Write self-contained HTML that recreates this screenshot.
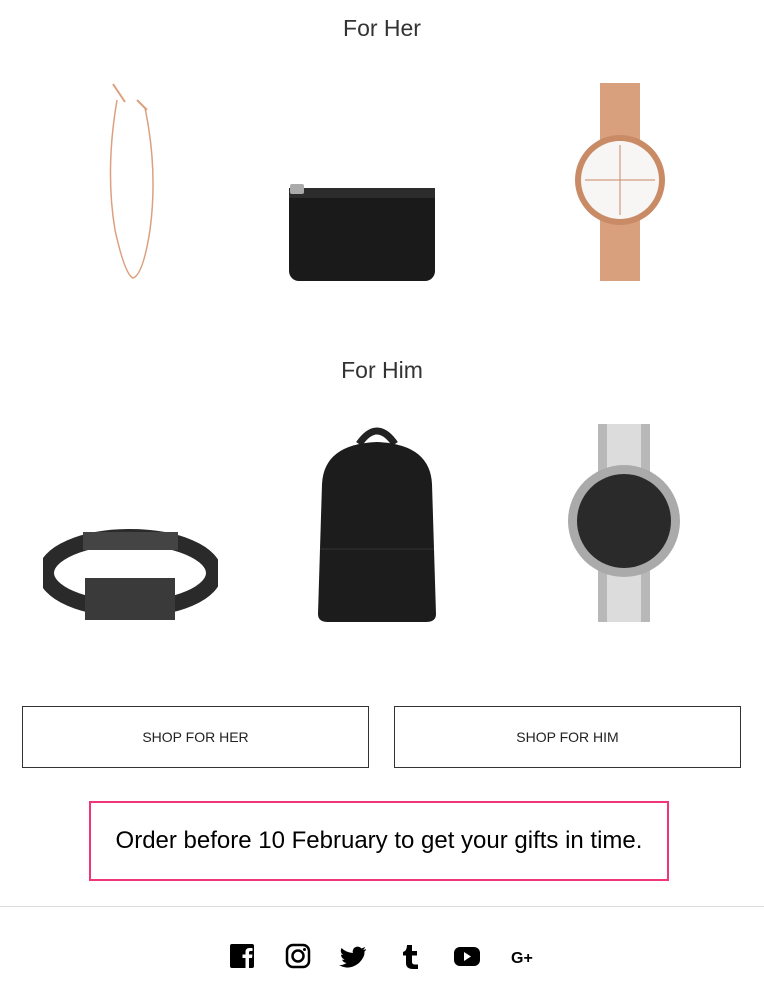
<!DOCTYPE html>
<html><head><meta charset="utf-8"><style>
body{margin:0;width:764px;height:989px;background:#fff;font-family:"Liberation Sans",Arial,sans-serif;position:relative;overflow:hidden}
.t{position:absolute;left:0;width:764px;text-align:center;font-size:23px;color:#333}
.a{position:absolute}
.btn{position:absolute;top:706px;width:347px;height:62px;border:1px solid #333;box-sizing:border-box;text-align:center;line-height:60px;font-size:14px;color:#222}
</style></head><body>
<div class="t" style="top:15px">For Her</div>
<div class="t" style="top:357px">For Him</div>
<svg class="a" style="left:95px;top:80px" width="80" height="205"><path d="M22 20 Q10 90 20 150 Q30 195 38 198 Q48 195 55 150 Q63 90 50 28" fill="none" stroke="#dca07e" stroke-width="1.5"/><path d="M18 4 L30 22 M42 20 L52 30" stroke="#dca07e" stroke-width="2"/></svg>
<svg class="a" style="left:286px;top:180px" width="152" height="104"><rect x="3" y="8" width="146" height="93" rx="10" fill="#1a1a1a"/><rect x="3" y="8" width="146" height="10" fill="#2c2c2c"/><rect x="4" y="4" width="14" height="10" rx="2" fill="#aaa"/></svg>
<svg class="a" style="left:572px;top:80px" width="96" height="204"><rect x="28" y="3" width="40" height="198" fill="#d9a07e"/><circle cx="48" cy="100" r="45" fill="#c98a66"/><circle cx="48" cy="100" r="39" fill="#f8f6f4"/><line x1="48" y1="65" x2="48" y2="135" stroke="#c98a66"/><line x1="13" y1="100" x2="83" y2="100" stroke="#c98a66"/></svg>
<svg class="a" style="left:43px;top:528px" width="175" height="98"><ellipse cx="87" cy="45" rx="84" ry="36" fill="none" stroke="#2a2a2a" stroke-width="16"/><rect x="42" y="50" width="90" height="42" fill="#3a3a3a"/><rect x="40" y="4" width="95" height="18" fill="#444"/></svg>
<svg class="a" style="left:314px;top:424px" width="126" height="200"><path d="M45 20 Q63 -6 81 20" fill="none" stroke="#222" stroke-width="7"/><path d="M8 60 Q10 20 63 18 Q116 20 118 60 L122 190 Q122 198 112 198 L14 198 Q4 198 4 190 Z" fill="#1c1c1c"/><line x1="6" y1="125" x2="120" y2="125" stroke="#333"/></svg>
<svg class="a" style="left:565px;top:421px" width="118" height="204"><rect x="33" y="3" width="52" height="198" fill="#b8b8b8"/><rect x="42" y="3" width="34" height="198" fill="#dcdcdc"/><circle cx="59" cy="100" r="56" fill="#aaa"/><circle cx="59" cy="100" r="47" fill="#2a2a2a"/></svg>
<div class="btn" style="left:22px">SHOP FOR HER</div>
<div class="btn" style="left:394px">SHOP FOR HIM</div>
<div class="a" style="left:89px;top:801px;width:580px;height:80px;border:2px solid #f0357b;box-sizing:border-box;text-align:center;line-height:76px;font-size:24px;color:#000">Order before 10 February to get your gifts in time.</div>
<div class="a" style="left:0;top:906px;width:764px;height:1px;background:#ddd"></div>
<svg class="a" style="left:228px;top:942px" width="320" height="30">
<rect x="2" y="2" width="24" height="24" rx="2" fill="#000"/><path d="M21 27 V16 H24 L24.5 12.5 H21 V10.5 Q21 9 22.5 9 H24.5 V6 H21.5 Q17.5 6 17.5 10 V12.5 H14.5 V16 H17.5 V27 Z" fill="#fff"/>
<rect x="59" y="3" width="22" height="22" rx="6" fill="none" stroke="#000" stroke-width="2.5"/><circle cx="70" cy="14" r="5.5" fill="none" stroke="#000" stroke-width="2.5"/><circle cx="76.5" cy="7.5" r="1.5"/>
<path d="M138 7 Q136 8 135 8 Q137 6 137 5 Q135 6 133.5 6.5 Q130 3 126 6 Q124 9 125 11 Q118 10.5 113.5 6 Q111.5 10 115 13 Q114 13 113 12.5 Q113 16 116.5 17.5 Q115 18 114 17.5 Q115 20.5 118.5 21 Q115 23.5 111 23 Q121 29 131 21 Q137 15 136.5 9.5 Q138 8.5 138 7Z"/>
<path d="M179 3 H184 V9 H189 V13.5 H184 V20 Q184 22.5 187 22.5 H190 V27 H185 Q178 27 178 21 V13.5 H175 V10 Q179 9 179 3Z"/>
<rect x="226" y="5" width="26" height="19" rx="6"/><path d="M236 10 L243 14.5 L236 19Z" fill="#fff"/>
<text x="283" y="21" font-family="Liberation Sans,sans-serif" font-weight="bold" font-size="16">G+</text>
</svg>
</body></html>
